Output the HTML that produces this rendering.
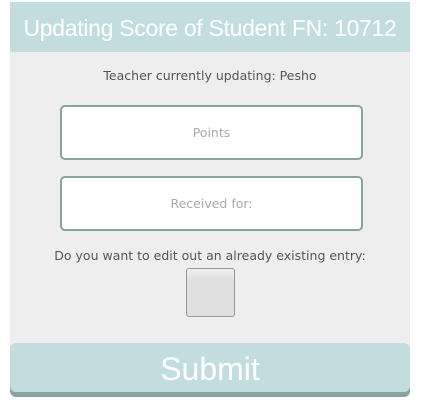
<!DOCTYPE html><html><head><style>
body{margin:0;width:421px;height:403px;background:#fff;font-family:"Liberation Sans",sans-serif;position:relative;overflow:hidden}
.p{position:absolute;left:10px;top:2px;width:400px;height:390px;background:#eeeeee}
.h{position:absolute;left:10px;top:2px;width:400px;height:50px;background:#c3dddf;color:#fff;font-size:23px;text-align:center;line-height:52px;letter-spacing:-0.3px}
.t{position:absolute;left:10px;width:400px;text-align:center;color:#555;font-size:12.5px;font-family:"DejaVu Sans",sans-serif}
.i{position:absolute;left:60px;width:299px;height:51px;border:2px solid #87a3a4;border-radius:5px;background:#fff;color:#aaa;font-size:12.5px;font-family:"DejaVu Sans",sans-serif;text-align:center;line-height:51px}
.c{position:absolute;left:186px;top:268px;width:47px;height:47px;border:1px solid #999;border-radius:3px;background:linear-gradient(#f0f0f0,#e0e0e0 20%,#e0e0e0)}
.s{position:absolute;left:10px;top:343px;width:400px;height:49px;background:#c3dddf;border-radius:6px;box-shadow:0 5px 0 #87a3a4;color:#fff;font-size:32px;text-align:center;line-height:52px}
</style></head><body>
<div class="p"></div>
<div class="h">Updating Score of Student FN: 10712</div>
<div class="t" style="top:68px">Teacher currently updating: Pesho</div>
<div class="i" style="top:105px">Points</div>
<div class="i" style="top:176px">Received for:</div>
<div class="t" style="top:248px">Do you want to edit out an already existing entry:</div>
<div class="c"></div>
<div class="s">Submit</div>
</body></html>
